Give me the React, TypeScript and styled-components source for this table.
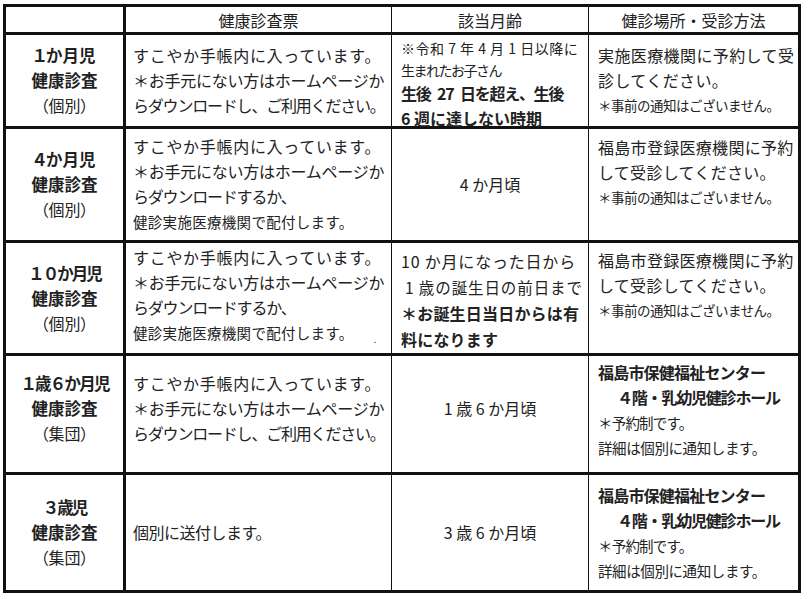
import { createGlobalStyle, styled } from "styled-components";

const GlobalStyle = createGlobalStyle`
  html, body {
    margin: 0;
    background: #fff;
  }
  body {
    font-family: "Noto Sans CJK JP", "Noto Sans", sans-serif;
    color: #222;
  }
`;

const Page = styled.div`
  padding: 4px 0 0 3px;
`;

const Table = styled.table`
  width: 798px;
  table-layout: fixed;
  border-spacing: 0;
  border-top: 3px solid #111;
  border-left: 3px solid #111;
`;

const Col = styled.col<{ $w: number }>`
  width: ${(p) => p.$w}px;
`;

const Row = styled.tr<{ $h: number }>`
  height: ${(p) => p.$h}px;
`;

const HeadCell = styled.th<{ $thick?: boolean }>`
  box-sizing: border-box;
  padding: 0;
  border-right: ${(p) => (p.$thick ? "3px" : "1px")} solid #111;
  border-bottom: 3px solid #111;
  font-weight: 400;
  font-size: 16px;
  line-height: 24px;
  text-align: center;
  vertical-align: middle;
`;

const Cell = styled.td<{ $thick?: boolean; $center?: boolean; $top?: boolean; $pad?: string }>`
  box-sizing: border-box;
  padding: ${(p) => p.$pad ?? "0 0 0 7px"};
  border-right: ${(p) => (p.$thick ? "3px" : "1px")} solid #111;
  border-bottom: 3px solid #111;
  text-align: ${(p) => (p.$center ? "center" : "left")};
  vertical-align: ${(p) => (p.$top ? "top" : "middle")};
`;

const Line = styled.div<{
  $size?: number;
  $bold?: boolean;
  $lh?: number;
  $indent?: number;
  $ls?: number;
  $palt?: boolean;
  $mb?: number;
}>`
  font-size: ${(p) => p.$size ?? 16}px;
  font-weight: ${(p) => (p.$bold ? 700 : 400)};
  line-height: ${(p) => p.$lh ?? 25}px;
  padding-left: ${(p) => p.$indent ?? 0}px;
  margin-bottom: ${(p) => p.$mb ?? 0}px;
  letter-spacing: ${(p) => p.$ls ?? 0}px;
  font-feature-settings: ${(p) => (p.$palt ? '"palt"' : "normal")};
  white-space: nowrap;
`;

const Dot = styled.span`
  margin-left: 20px;
  font-size: 10px;
  vertical-align: -4px;
`;

type L = {
  t: React.ReactNode;
  size?: number;
  bold?: boolean;
  lh?: number;
  indent?: number;
  ls?: number;
  palt?: boolean;
  mb?: number;
};

const lines = (ls: L[]) =>
  ls.map((l, i) => (
    <Line
      key={i}
      $size={l.size}
      $bold={l.bold}
      $lh={l.lh}
      $indent={l.indent}
      $ls={l.ls}
      $palt={l.palt}
      $mb={l.mb}
    >
      {l.t}
    </Line>
  ));

const kind = (age: L, type: string): L[] => [
  { bold: true, size: 16.5, ...age },
  { t: "健康診査", bold: true, size: 16.5 },
  { t: `（${type}）`, palt: true },
];

const techo: L[] = [
  { t: "すこやか手帳内に入っています。", ls: 0.7 },
  { t: "＊お手元にない方はホームページか", ls: -0.25 },
];

const download: L[] = [...techo, { t: "らダウンロードし、ご利用ください。", ls: -1.2 }];

const haifu = (dot?: boolean): L[] => [
  ...techo,
  { t: "らダウンロードするか、", ls: -1.2 },
  {
    t: (
      <>
        健診実施医療機関で配付します。{dot && <Dot>.</Dot>}
      </>
    ),
    size: 14.5,
    ls: 0.3,
    lh: 26,
  },
];

const notice: L = { t: "＊事前の通知はございません。", size: 13.5, ls: -0.5 };

const touroku: L[] = [
  { t: "福島市登録医療機関に予約", ls: 0.3 },
  { t: "して受診してください。", ls: 0.3 },
  notice,
];

const center: L[] = [
  { t: "福島市保健福祉センター", bold: true, ls: -0.8 },
  { t: "４階・乳幼児健診ホール", bold: true, ls: -1.2, indent: 19 },
  { t: "＊予約制です。", size: 14.5, ls: -0.8 },
  { t: "詳細は個別に通知します。", size: 14.5, ls: -0.4 },
];

type RowData = {
  h: number;
  kind: L[];
  form: L[];
  age: L[];
  ageTop?: boolean;
  ageCenter?: boolean;
  place: L[];
  placeTop?: boolean;
  lift?: number;
};

const rows: RowData[] = [
  {
    h: 94,
    kind: kind({ t: "１か月児", palt: true }, "個別"),
    form: download,
    age: [
      { t: "※令和 7 年 4 月 1 日以降に", size: 14, lh: 21, ls: 0.5 },
      { t: "生まれたお子さん", size: 14, lh: 22, ls: -1.5 },
      { t: "生後\u200227\u2002日を超え、生後", bold: true, size: 16, ls: -1.3 },
      { t: "6 週に達しない時期", bold: true, size: 16, lh: 24, mb: -4 },
    ],
    ageTop: true,
    place: [
      { t: "実施医療機関に予約して受", ls: 0.4 },
      { t: "診してください。", ls: 0.4 },
      notice,
    ],
  },
  {
    h: 114,
    kind: kind({ t: "４か月児", palt: true }, "個別"),
    form: haifu(),
    age: [{ t: "4 か月頃" }],
    ageCenter: true,
    place: touroku,
    placeTop: true,
  },
  {
    h: 113,
    kind: kind({ t: "１０か月児", ls: -2 }, "個別"),
    form: haifu(true),
    age: [
      { t: "10 か月になった日から", lh: 26, ls: 0.8 },
      { t: "1 歳の誕生日の前日まで", size: 15.5, lh: 26, ls: 0.9, indent: 4 },
      { t: "＊お誕生日当日からは有", bold: true, lh: 26, ls: 0.2 },
      { t: "料になります", bold: true, lh: 26, ls: 0.2 },
    ],
    ageTop: true,
    place: touroku,
    placeTop: true,
  },
  {
    h: 119,
    kind: kind({ t: "１歳６か月児", ls: -1.8 }, "集団"),
    form: download,
    age: [{ t: "1 歳 6 か月頃" }],
    ageCenter: true,
    place: center,
    lift: 12,
  },
  {
    h: 118,
    kind: kind({ t: "３歳児", ls: -2 }, "集団"),
    form: [{ t: "個別に送付します。", ls: -0.5 }],
    age: [{ t: "3 歳 6 か月頃" }],
    ageCenter: true,
    place: center,
  },
];

export default function App() {
  return (
    <>
      <GlobalStyle />
      <Page>
        <Table>
          <colgroup>
            <Col $w={120} />
            <Col $w={266} />
            <Col $w={197} />
            <Col $w={212} />
          </colgroup>
          <thead>
            <Row $h={28}>
              <HeadCell $thick></HeadCell>
              <HeadCell>健康診査票</HeadCell>
              <HeadCell>該当月齢</HeadCell>
              <HeadCell $thick>健診場所・受診方法</HeadCell>
            </Row>
          </thead>
          <tbody>
            {rows.map((r, i) => {
              const lift = r.lift ?? 0;
              return (
                <Row key={i} $h={r.h}>
                  <Cell $thick $center $pad={`0 0 ${lift}px 0`}>
                    {lines(r.kind)}
                  </Cell>
                  <Cell $pad={`0 0 ${lift}px 7px`}>{lines(r.form)}</Cell>
                  <Cell
                    $center={r.ageCenter}
                    $top={r.ageTop}
                    $pad={r.ageCenter ? `0 0 ${lift}px 0` : r.ageTop ? `${i === 0 ? 3 : 5}px 0 0 9px` : undefined}
                  >
                    {lines(r.age)}
                  </Cell>
                  <Cell
                    $thick
                    $top={r.placeTop}
                    $pad={r.placeTop ? `${i === 1 ? 6 : 5}px 0 0 9px` : `0 0 ${lift ? 8 : 0}px 9px`}
                  >
                    {lines(r.place)}
                  </Cell>
                </Row>
              );
            })}
          </tbody>
        </Table>
      </Page>
    </>
  );
}
